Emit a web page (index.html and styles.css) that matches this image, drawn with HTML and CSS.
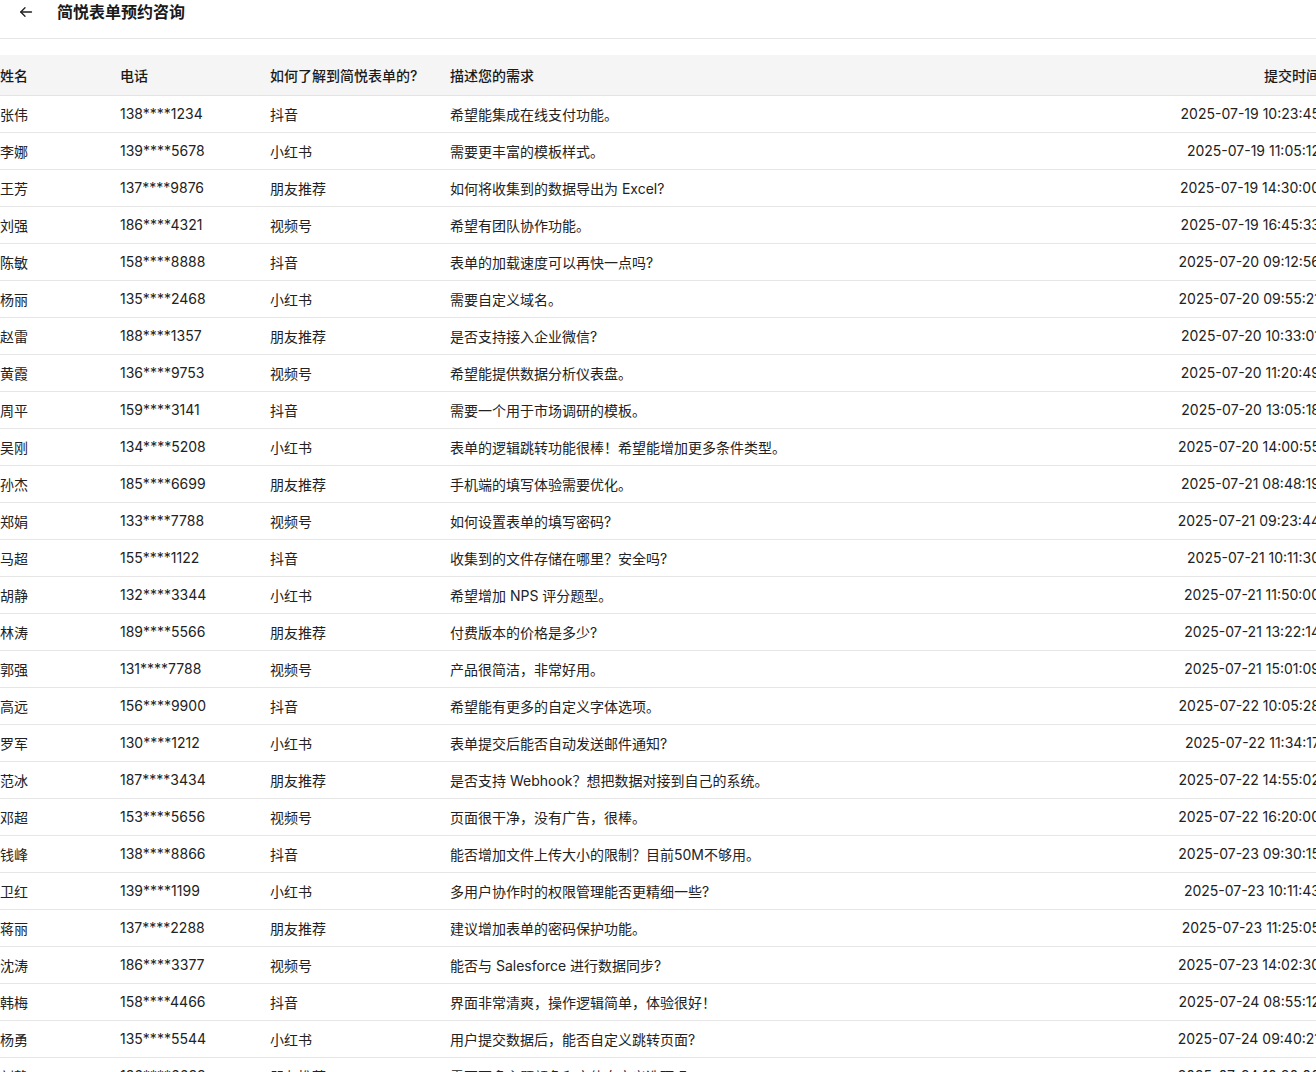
FILE: index.html
```html
<!DOCTYPE html>
<html lang="zh-CN">
<head>
<meta charset="utf-8">
<title>简悦表单预约咨询</title>
<link rel="stylesheet" href="styles.css">
</head>
<body>
<header class="topbar">
  <span class="back">
    <svg width="14" height="14" viewBox="0 0 14 14" fill="none" stroke="#1f1f1f" stroke-width="1.3" stroke-linecap="round" stroke-linejoin="round"><path d="M12.5 7H1.8"/><path d="M6 2.8L1.8 7L6 11.2"/></svg>
  </span>
  <h1 class="title">简悦表单预约咨询</h1>
</header>
<main class="wrap">
  <table class="grid">
    <colgroup>
      <col class="c-name"><col class="c-phone"><col class="c-src"><col class="c-desc"><col class="c-time">
    </colgroup>
    <thead>
      <tr><th>姓名</th><th>电话</th><th>如何了解到简悦表单的?</th><th>描述您的需求</th><th class="r">提交时间</th></tr>
    </thead>
    <tbody>
      <tr><td>张伟</td><td>138****1234</td><td>抖音</td><td>希望能集成在线支付功能。</td><td class="r">2025-07-19 10:23:45</td></tr>
      <tr><td>李娜</td><td>139****5678</td><td>小红书</td><td>需要更丰富的模板样式。</td><td class="r">2025-07-19 11:05:12</td></tr>
      <tr><td>王芳</td><td>137****9876</td><td>朋友推荐</td><td>如何将收集到的数据导出为 Excel?</td><td class="r">2025-07-19 14:30:00</td></tr>
      <tr><td>刘强</td><td>186****4321</td><td>视频号</td><td>希望有团队协作功能。</td><td class="r">2025-07-19 16:45:33</td></tr>
      <tr><td>陈敏</td><td>158****8888</td><td>抖音</td><td>表单的加载速度可以再快一点吗?</td><td class="r">2025-07-20 09:12:56</td></tr>
      <tr><td>杨丽</td><td>135****2468</td><td>小红书</td><td>需要自定义域名。</td><td class="r">2025-07-20 09:55:21</td></tr>
      <tr><td>赵雷</td><td>188****1357</td><td>朋友推荐</td><td>是否支持接入企业微信?</td><td class="r">2025-07-20 10:33:01</td></tr>
      <tr><td>黄霞</td><td>136****9753</td><td>视频号</td><td>希望能提供数据分析仪表盘。</td><td class="r">2025-07-20 11:20:49</td></tr>
      <tr><td>周平</td><td>159****3141</td><td>抖音</td><td>需要一个用于市场调研的模板。</td><td class="r">2025-07-20 13:05:18</td></tr>
      <tr><td>吴刚</td><td>134****5208</td><td>小红书</td><td>表单的逻辑跳转功能很棒！希望能增加更多条件类型。</td><td class="r">2025-07-20 14:00:55</td></tr>
      <tr><td>孙杰</td><td>185****6699</td><td>朋友推荐</td><td>手机端的填写体验需要优化。</td><td class="r">2025-07-21 08:48:19</td></tr>
      <tr><td>郑娟</td><td>133****7788</td><td>视频号</td><td>如何设置表单的填写密码?</td><td class="r">2025-07-21 09:23:44</td></tr>
      <tr><td>马超</td><td>155****1122</td><td>抖音</td><td>收集到的文件存储在哪里？安全吗?</td><td class="r">2025-07-21 10:11:30</td></tr>
      <tr><td>胡静</td><td>132****3344</td><td>小红书</td><td>希望增加 NPS 评分题型。</td><td class="r">2025-07-21 11:50:00</td></tr>
      <tr><td>林涛</td><td>189****5566</td><td>朋友推荐</td><td>付费版本的价格是多少?</td><td class="r">2025-07-21 13:22:14</td></tr>
      <tr><td>郭强</td><td>131****7788</td><td>视频号</td><td>产品很简洁，非常好用。</td><td class="r">2025-07-21 15:01:09</td></tr>
      <tr><td>高远</td><td>156****9900</td><td>抖音</td><td>希望能有更多的自定义字体选项。</td><td class="r">2025-07-22 10:05:28</td></tr>
      <tr><td>罗军</td><td>130****1212</td><td>小红书</td><td>表单提交后能否自动发送邮件通知?</td><td class="r">2025-07-22 11:34:17</td></tr>
      <tr><td>范冰</td><td>187****3434</td><td>朋友推荐</td><td>是否支持 Webhook？想把数据对接到自己的系统。</td><td class="r">2025-07-22 14:55:02</td></tr>
      <tr><td>邓超</td><td>153****5656</td><td>视频号</td><td>页面很干净，没有广告，很棒。</td><td class="r">2025-07-22 16:20:00</td></tr>
      <tr><td>钱峰</td><td>138****8866</td><td>抖音</td><td>能否增加文件上传大小的限制？目前50M不够用。</td><td class="r">2025-07-23 09:30:15</td></tr>
      <tr><td>卫红</td><td>139****1199</td><td>小红书</td><td>多用户协作时的权限管理能否更精细一些?</td><td class="r">2025-07-23 10:11:43</td></tr>
      <tr><td>蒋丽</td><td>137****2288</td><td>朋友推荐</td><td>建议增加表单的密码保护功能。</td><td class="r">2025-07-23 11:25:05</td></tr>
      <tr><td>沈涛</td><td>186****3377</td><td>视频号</td><td>能否与 Salesforce 进行数据同步?</td><td class="r">2025-07-23 14:02:30</td></tr>
      <tr><td>韩梅</td><td>158****4466</td><td>抖音</td><td>界面非常清爽，操作逻辑简单，体验很好！</td><td class="r">2025-07-24 08:55:12</td></tr>
      <tr><td>杨勇</td><td>135****5544</td><td>小红书</td><td>用户提交数据后，能否自定义跳转页面?</td><td class="r">2025-07-24 09:40:21</td></tr>
      <tr><td>刘静</td><td>136****6633</td><td>朋友推荐</td><td>需要更多主题颜色和字体自定义选项吗</td><td class="r">2025-07-24 10:30:00</td></tr>
    </tbody>
  </table>
</main>
</body>
</html>
```

FILE: styles.css
```css
html, body {
  margin: 0;
  padding: 0;
  background: #ffffff;
  overflow-x: hidden;
}
body {
  font-family: Inter, "Noto Sans CJK SC", "Liberation Sans", sans-serif;
  font-size: 14px;
  color: #1f1f1f;
}
.topbar {
  display: flex;
  align-items: center;
  height: 24px;
  padding-bottom: 14px;
  border-bottom: 1px solid #e6e6e6;
}
.back {
  display: flex;
  align-items: center;
  margin-left: 19px;
  width: 14px;
  height: 24px;
}
.title {
  margin: 0 0 0 24px;
  font-size: 16px;
  font-weight: 600;
  line-height: 24px;
  color: #1a1a1a;
}
.wrap {
  margin-top: 16px;
  width: 100%;
  overflow: hidden;
}
.grid {
  width: 1320px;
  border-collapse: collapse;
  table-layout: fixed;
}
.c-name { width: 120px; }
.c-phone { width: 150px; }
.c-src { width: 180px; }
.c-time { width: 200px; }
.grid th {
  height: 39px;
  padding: 0 0 1px 0;
  background: #f5f5f5;
  border-bottom: 1px solid #e4e4e4;
  text-align: left;
  font-weight: 500;
  color: #1a1a1a;
  white-space: nowrap;
}
.grid td {
  height: 35px;
  padding: 0 0 1px 0;
  border-bottom: 1px solid #e6e6e6;
  white-space: nowrap;
  color: #222222;
}
.grid .r {
  text-align: right;
}
```
